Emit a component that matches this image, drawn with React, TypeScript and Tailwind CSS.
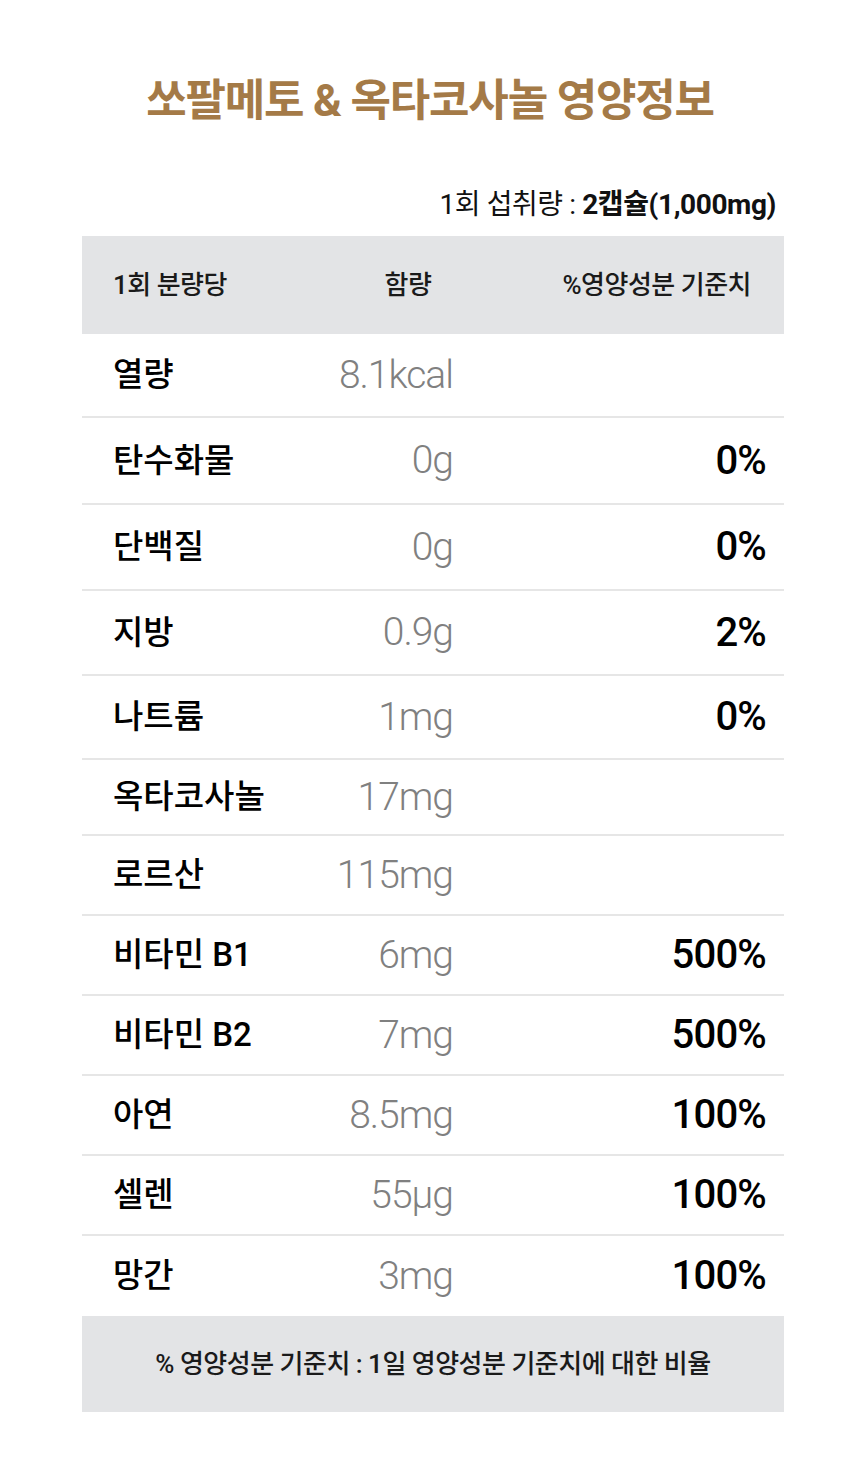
const rows = [
  { name: "열량", amount: "8.1kcal", pct: "", h: "h-[84px]" },
  { name: "탄수화물", amount: "0g", pct: "0%", h: "h-[87px]" },
  { name: "단백질", amount: "0g", pct: "0%", h: "h-[86px]" },
  { name: "지방", amount: "0.9g", pct: "2%", h: "h-[85px]" },
  { name: "나트륨", amount: "1mg", pct: "0%", h: "h-[84px]" },
  { name: "옥타코사놀", amount: "17mg", pct: "", h: "h-[76px]" },
  { name: "로르산", amount: "115mg", pct: "", h: "h-[80px]" },
  { name: "비타민 B1", amount: "6mg", pct: "500%", h: "h-[80px]" },
  { name: "비타민 B2", amount: "7mg", pct: "500%", h: "h-[80px]" },
  { name: "아연", amount: "8.5mg", pct: "100%", h: "h-[80px]" },
  { name: "셀렌", amount: "55μg", pct: "100%", h: "h-[80px]" },
  { name: "망간", amount: "3mg", pct: "100%", h: "h-[80px]" },
];

export default function App() {
  return (
    <div className="w-[860px] h-[1470px] bg-white font-['Roboto','Noto_Sans_CJK_KR',sans-serif] text-black">
      <h1 className="pt-[76px] h-[164px] text-center text-[44px] leading-[50px] font-bold tracking-[-1.2px] text-[#a47a47]">
        쏘팔메토 &amp; 옥타코사놀 영양정보
      </h1>

      <div className="mx-[82px] w-[702px]">
        <p className="flex h-[72px] items-center justify-end pt-[10px] pr-[8px] text-[28px] tracking-[-0.4px] text-[#111]">
          <span>
            1회 섭취량 : <span className="font-bold">2캡슐(1,000mg)</span>
          </span>
        </p>

        <div className="grid h-[98px] grid-cols-[253px_146px_1fr] items-center bg-[#e3e4e6] text-[26px] font-medium tracking-[-0.5px] text-[#1a1a1a]">
          <span className="pl-[31px]">1회 분량당</span>
          <span className="text-center">함량</span>
          <span className="pr-[33px] text-right">%영양성분 기준치</span>
        </div>

        {rows.map((r, i) => (
          <div
            key={r.name}
            className={`grid ${r.h} grid-cols-[240px_131px_1fr] items-center ${
              i < rows.length - 1 ? "border-b-2 border-[#e6e6e6]" : ""
            }`}
          >
            <span className="pl-[31px] text-[33px] font-medium">{r.name}</span>
            <span className="text-right text-[39px] font-light tracking-[-1px] text-[#808080]">
              {r.amount}
            </span>
            <span className="pr-[18px] text-right text-[40px] font-medium tracking-[-0.8px]">{r.pct}</span>
          </div>
        ))}

        <div className="flex h-[96px] items-center justify-center bg-[#e3e4e6] text-[26px] font-medium tracking-[-0.5px] text-[#1a1a1a]">
          % 영양성분 기준치 : 1일 영양성분 기준치에 대한 비율
        </div>
      </div>
    </div>
  );
}
